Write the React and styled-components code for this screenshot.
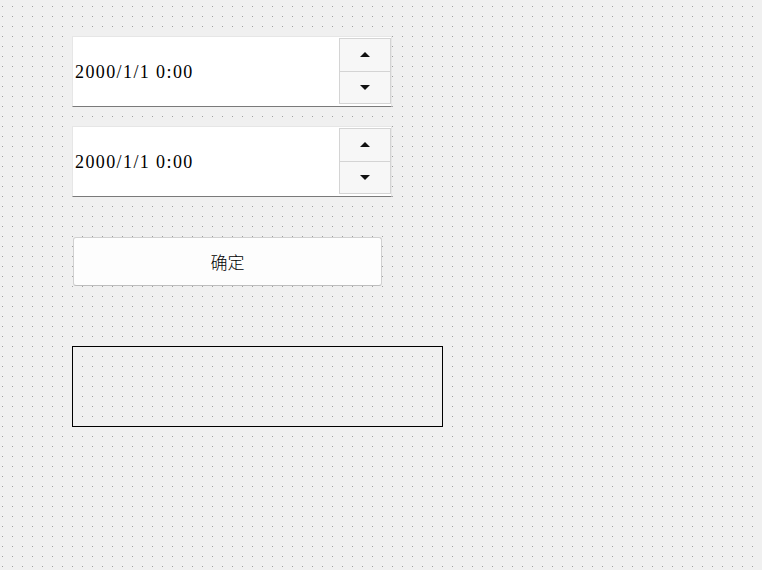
import React from "react";
import styled, { createGlobalStyle } from "styled-components";

const GlobalStyle = createGlobalStyle`
    html, body {
        margin: 0;
        padding: 0;
        width: 100%;
        height: 100%;
    }
    body {
        background-color: #f0f0f0;
        background-image:
            linear-gradient(to bottom, transparent 1px, #f0f0f0 1px),
            linear-gradient(to right, #a0a0a0 1px, #f0f0f0 1px);
        background-size: 10px 10px, 10px 10px;
        background-position: 2px 6px, 2px 6px;
        font-family: "Liberation Serif", "Noto Sans CJK SC", serif;
    }
`;

const Form = styled.div`
    display: flex;
    flex-direction: column;
    align-items: flex-start;
    padding: 36px 0 0 72px;
`;

const SpinBox = styled.div`
    display: flex;
    width: 320px;
    height: 71px;
    box-sizing: border-box;
    background: #ffffff;
    border: 1px solid #e6e6e6;
    border-bottom: 1px solid #7a7a7a;
    margin-bottom: ${({ $gap }) => $gap}px;
`;

const DateText = styled.div`
    flex: 1;
    display: flex;
    align-items: center;
    padding-left: 2px;
    padding-top: 1px;
    font-family: "Liberation Serif", serif;
    font-size: 18px;
    letter-spacing: 1.4px;
    color: #000;
`;

const Buttons = styled.div`
    display: flex;
    flex-direction: column;
    width: 52px;
    padding: 1px 0 2px 0;
`;

const StepButton = styled.div`
    flex: 1;
    display: flex;
    align-items: center;
    justify-content: center;
    background: #f7f7f7;
    border: 1px solid #d4d4d4;
    border-top: ${({ $down }) => ($down ? "none" : "1px solid #d4d4d4")};
`;

const Arrow = styled.div`
    width: 0;
    height: 0;
    border-left: 5px solid transparent;
    border-right: 5px solid transparent;
    ${({ $down }) =>
        $down ? "border-top: 5px solid #111;" : "border-bottom: 5px solid #111;"}
`;

const ConfirmButton = styled.button`
    width: 309px;
    height: 49px;
    margin: 0 0 60px 1px;
    box-sizing: border-box;
    background: #fdfdfd;
    border: 1px solid #d0d0d0;
    border-bottom-color: #bcbcbc;
    border-radius: 3px;
    font-family: "Noto Sans CJK SC", sans-serif;
    font-size: 17px;
    font-weight: 300;
    color: #000;
    padding: 0 0 1px 0;
`;

const OutputBox = styled.div`
    width: 371px;
    height: 81px;
    box-sizing: border-box;
    border: 1px solid #000;
`;

const DateSpin = ({ value, gap }) => (
    <SpinBox $gap={gap}>
        <DateText>{value}</DateText>
        <Buttons>
            <StepButton>
                <Arrow />
            </StepButton>
            <StepButton $down>
                <Arrow $down />
            </StepButton>
        </Buttons>
    </SpinBox>
);

const App = () => {
    return (
        <>
            <GlobalStyle />
            <Form>
                <DateSpin value="2000/1/1 0:00" gap={19} />
                <DateSpin value="2000/1/1 0:00" gap={40} />
                <ConfirmButton>确定</ConfirmButton>
                <OutputBox />
            </Form>
        </>
    );
};

export default App;
